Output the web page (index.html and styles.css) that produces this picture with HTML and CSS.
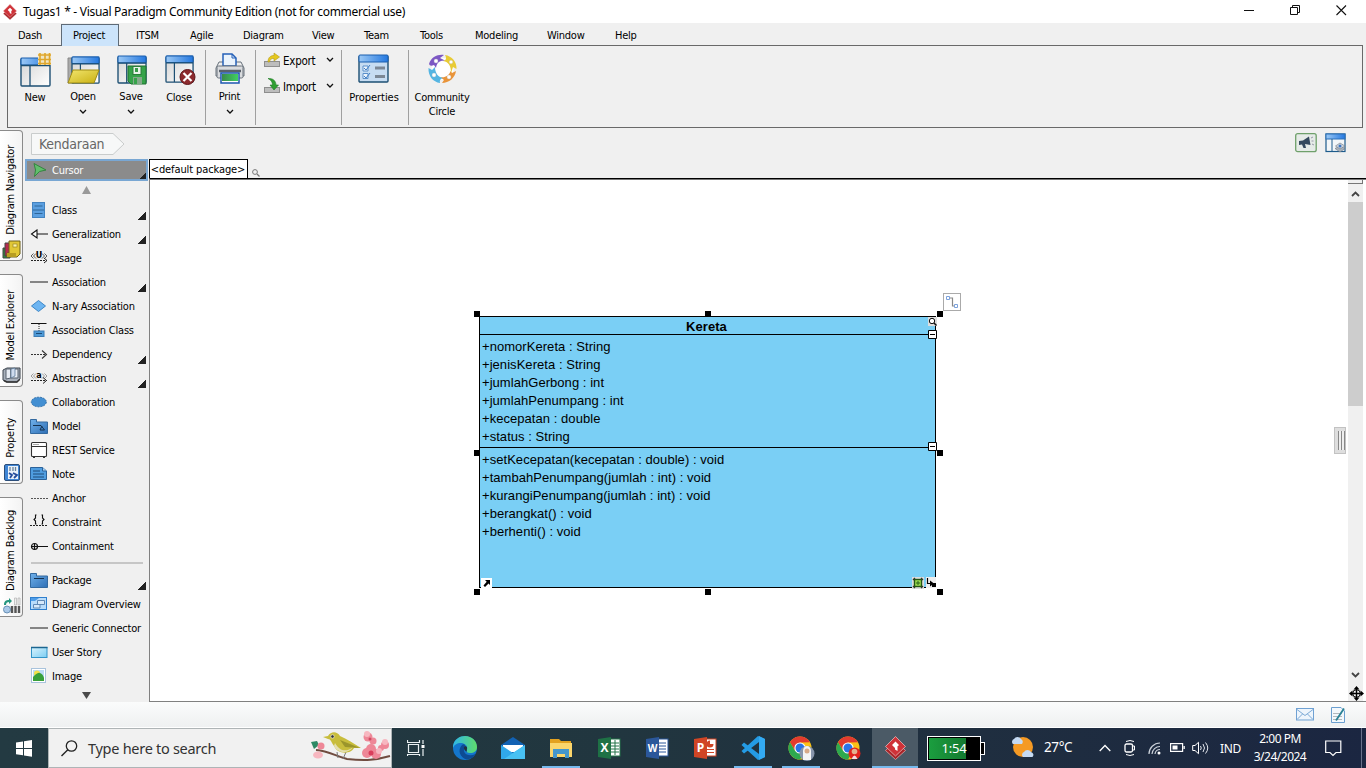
FILE: index.html
```html
<!DOCTYPE html>
<html lang="en">
<head>
<meta charset="utf-8">
<title>Tugas1 * - Visual Paradigm Community Edition</title>
<link rel="stylesheet" href="styles.css">
</head>
<body>
<svg class="defs" width="0" height="0">
  <defs>
    <linearGradient id="gBlue" x1="0" y1="0" x2="1" y2="0"><stop offset="0" stop-color="#9cc9f5"/><stop offset="1" stop-color="#2478e0"/></linearGradient>
    <linearGradient id="gPane" x1="0" y1="0" x2="1" y2="1"><stop offset="0" stop-color="#d4d4d4"/><stop offset="1" stop-color="#ffffff"/></linearGradient>
    <linearGradient id="gFold" x1="0" y1="0" x2="1" y2="1"><stop offset="0" stop-color="#f2e66e"/><stop offset="1" stop-color="#c9b012"/></linearGradient>
    <linearGradient id="gNode" x1="0" y1="0" x2="1" y2="1"><stop offset="0" stop-color="#6fb0ea"/><stop offset="1" stop-color="#2f6fb5"/></linearGradient>
    <linearGradient id="gGreen" x1="0" y1="0" x2="1" y2="0"><stop offset="0" stop-color="#3a8a4a"/><stop offset="1" stop-color="#3fcf62"/></linearGradient>
    <linearGradient id="gEdge" x1="0" y1="0" x2="1" y2="0"><stop offset="0" stop-color="#2fb6e8"/><stop offset="1" stop-color="#5fdc6a"/></linearGradient>
    <linearGradient id="gCyan" x1="0" y1="0" x2="1" y2="1"><stop offset="0" stop-color="#d8f3fd"/><stop offset="1" stop-color="#7ccdf2"/></linearGradient>
    <symbol id="win" viewBox="0 0 32 30">
      <rect x="1" y="2" width="29" height="27" rx="1" fill="url(#gPane)" stroke="#1d4f73" stroke-width="1.4"/>
      <rect x="1" y="1" width="29" height="7" rx="1" fill="url(#gBlue)" stroke="#1a5fae" stroke-width="1.2"/>
      <path d="M1 8.5H30M10 8.5V29" stroke="#1d4f73" stroke-width="1.3"/>
    </symbol>
    <symbol id="chev" viewBox="0 0 8 6"><path d="M1 1L4 4L7 1" fill="none" stroke="#111" stroke-width="1.3"/></symbol>
    <symbol id="logo" viewBox="0 0 21 24">
      <path d="M10.500 5L20.500 14.500L10.500 23.500L.5 14.500Z" fill="#a82428" stroke="#e6b0b0" stroke-width=".7"/>
      <path d="M10.500 .5L20.500 10.500L10.500 20L.5 10.500Z" fill="#cf3238" stroke="#efc5c5" stroke-width=".7"/>
      <path d="M10.500 5.500L14 9L10.500 12.500L7 9ZM10 11H12.500V15L10 13.500Z" fill="#fff"/>
    </symbol>
    <symbol id="chrome" viewBox="0 0 24 24">
      <circle cx="12" cy="12" r="11.5" fill="#fbc116"/>
      <path d="M2 6.2A11.5 11.5 0 0 1 22 6.2L12 6.5L7 14.5Z" fill="#e33b2e"/>
      <path d="M2 6.2A11.5 11.5 0 0 0 12 23.5L16.8 15L7 14.8Z" fill="#2da94f"/>
      <circle cx="12" cy="12" r="5.6" fill="#fff"/><circle cx="12" cy="12" r="4.5" fill="#2a73e8"/>
    </symbol>
  </defs>
</svg>

<header class="titlebar">
  <svg class="app-logo" width="14" height="16"><use href="#logo"/></svg>
  <span class="title">Tugas1 * - Visual Paradigm Community Edition (not for commercial use)</span>
  <div class="winctl">
    <svg width="11" height="11"><path d="M0 5.5H10" stroke="#111"/></svg>
    <svg width="11" height="11"><path d="M.5 2.5H7.5V9.5H.5ZM2.5 2.5V.5H9.5V7.5H7.5" fill="none" stroke="#111"/></svg>
    <svg width="11" height="11"><path d="M.5 .5L10 10M10 .5L.5 10" stroke="#111" stroke-width="1.1"/></svg>
  </div>
</header>

<nav class="menu">
  <span class="m1">Dash</span><span class="active">Project</span><span class="m3">ITSM</span><span class="m4">Agile</span><span class="m5">Diagram</span><span class="m6">View</span><span class="m7">Team</span><span class="m8">Tools</span><span class="m9">Modeling</span><span class="m10">Window</span><span class="m11">Help</span>
</nav>

<section class="ribbon">
  <div class="group g-file">
    <div class="tool">
      <svg width="34" height="34" viewBox="0 0 34 34"><use href="#win" x="2" y="4" width="32" height="30"/><rect x="20" y="0" width="13" height="12" fill="#f0e6c4"/><path d="M22 0V12M27 0V12M31.500 0V12M20 2H33M20 6.500H33M20 10.500H33" stroke="#dfa62c" stroke-width="1.6"/></svg>
      <span>New</span>
    </div>
    <div class="tool">
      <svg width="34" height="34" viewBox="0 0 34 34"><path d="M2 5H8V30H2Z" fill="#aaa" stroke="#888"/><use href="#win" x="5" y="3" width="30" height="28"/><path d="M7 17H33L28 30H2Z" fill="url(#gFold)" stroke="#a08c14"/></svg>
      <span class="up">Open</span><svg class="chev" width="8" height="6"><use href="#chev"/></svg>
    </div>
    <div class="tool">
      <svg width="34" height="34" viewBox="0 0 34 34"><use href="#win" x="3" y="2" width="31" height="29"/><path d="M14 13H32V31H17L14 28Z" fill="#35a349" stroke="#1f7131"/><rect x="19" y="13.500" width="8" height="8" fill="#e9f4ea" stroke="#2b7d3b"/><rect x="21" y="15" width="3" height="4" fill="#379c48"/><path d="M19 24H28V31H19Z" fill="#85a98b"/><path d="M20 25H23V31H20Z" fill="#35a349"/></svg>
      <span class="up">Save</span><svg class="chev" width="8" height="6"><use href="#chev"/></svg>
    </div>
    <div class="tool">
      <svg width="34" height="34" viewBox="0 0 34 34"><use href="#win" x="3" y="2" width="30" height="28"/><circle cx="25.500" cy="24" r="7.500" fill="#8c2a2e" stroke="#5d1519"/><path d="M21.500 20L29.500 28M29.500 20L21.500 28" stroke="#fff" stroke-width="2.2"/></svg>
      <span>Close</span>
    </div>
  </div>
  <div class="group g-print">
    <div class="tool">
      <svg width="34" height="34" viewBox="0 0 34 34"><path d="M6 9H28L31 15V23H3V15Z" fill="#eee" stroke="#66707a"/><path d="M10 1H19L23 5V13H10Z" fill="#eaf3fc" stroke="#2560b8" stroke-width="1.5"/><path d="M19 1V5H23" fill="none" stroke="#2560b8"/><rect x="4" y="13" width="26" height="12" rx="1.500" fill="#d9dbde" stroke="#69717a"/><path d="M6 18H28" stroke="#59616b" stroke-width="2.500"/><path d="M8 20H26V30H8Z" fill="#fff" stroke="#1d57b0" stroke-width="1.500"/><rect x="9" y="21" width="16" height="7" fill="url(#gGreen)"/></svg>
      <span class="up">Print</span><svg class="chev" width="8" height="6"><use href="#chev"/></svg>
    </div>
  </div>
  <div class="group g-io">
    <div class="io"><svg width="17" height="16" viewBox="0 0 17 16"><rect x=".5" y="9.500" width="15" height="5" fill="#bdbdbd" stroke="#8e8e8e"/><path d="M4 10C4 5 7 3.500 10 3.500V1L15.500 5L10 9V6.500C7 6 6 8 5.500 10Z" fill="#e6c81e" stroke="#b39a19" stroke-width=".6"/></svg><span>Export</span><svg width="8" height="6"><use href="#chev"/></svg></div>
    <div class="io"><svg width="17" height="16" viewBox="0 0 17 16"><rect x=".5" y="9.500" width="15" height="5" fill="#bdbdbd" stroke="#8e8e8e"/><path d="M4 .5C9 0 12 3 12 7H14.500L10 12L6 7H8.500C8.500 4 7 2 4 .5Z" fill="#2f9f32" stroke="#1f7a24" stroke-width=".6"/></svg><span>Import</span><svg width="8" height="6"><use href="#chev"/></svg></div>
  </div>
  <div class="group g-prop">
    <div class="tool">
      <svg width="34" height="34" viewBox="0 0 34 34"><rect x="2" y="3" width="29" height="26" rx="1" fill="#c6dcf2" stroke="#1d4f73" stroke-width="1.400"/><rect x="2" y="2" width="29" height="7" rx="1" fill="url(#gBlue)" stroke="#1a5fae"/><path d="M6 13H11V18H6ZM6 20.500H11V25.500H6Z" fill="#eef5fc" stroke="#5a8fca"/><path d="M7 15L9 17L13 12M7 23L9 25L13 20" fill="none" stroke="#3f7ec6"/><path d="M18 15H28M18 23.500H28" stroke="#7b8795" stroke-width="3"/></svg>
      <span>Properties</span>
    </div>
  </div>
  <div class="group g-comm">
    <div class="tool">
      <svg width="34" height="34" viewBox="0 0 34 34"><circle cx="17.500" cy="16" r="11" fill="#fff"/><path d="M4 11C6 4 13 1 19 2L15 5L21 8C15 7 12 9 11 15L9 12Q5 14 4 11Z" fill="#7d58c4"/><path d="M20 2C27 3 32 9 31.500 16L28 14L26 20C26 13 24 9 18 8Q23 7 20 2Z" fill="#e8cb35"/><path d="M31 18C30 25 24 30 17 30L19 27L15 24C20 25 24 23 25.500 18L27 20Z" fill="#e9943a"/><path d="M15 30C8 29 3 23 3.500 15L7 17L10 14C10 20 13 24 18 25Q14 26 15 30Z" fill="#55b5e2"/><g fill="#fff" stroke="#bbb" stroke-width=".3"><circle cx="11" cy="8" r="2"/><circle cx="26" cy="9" r="1.800"/><circle cx="24" cy="24" r="2"/><circle cx="9" cy="22" r="2"/></g></svg>
      <span>Community<br>Circle</span>
    </div>
  </div>
</section>

<main class="work">
  <aside class="sidetabs">
    <div class="stab t1"><span>Diagram Navigator</span><svg width="19" height="19" viewBox="0 0 19 19"><path d="M1 8H8V18H1Z" fill="#2f8a3a" stroke="#444"/><path d="M3 3H12V16H3Z" fill="#b52a50" stroke="#444"/><path d="M7 1H18V14L15 17H5V13H7Z" fill="#e1c735" stroke="#6f601a"/><path d="M5 13H14V17H5Z" fill="#b79d23"/><rect x="11" y="4" width="4" height="3" fill="#fff4a4" stroke="#8a7720" stroke-width=".6"/></svg></div>
    <div class="stab t2"><span>Model Explorer</span><svg width="19" height="19" viewBox="0 0 19 19"><path d="M1 4L5 2H18V13L15 16H4L1 14Z" fill="#a8b0bb" stroke="#3d454e"/><path d="M4 3H9V12L4 13ZM9 3H16V12H9Z" fill="#e8edf4" stroke="#59636f"/><path d="M9 3L13 2V10L9 12Z" fill="#cfdcee" stroke="#50708f" stroke-width=".7"/><path d="M2 14.500L5 16H15L17.500 13.500" fill="none" stroke="#333" stroke-width="1.500"/></svg></div>
    <div class="stab t3"><span>Property</span><svg width="19" height="19" viewBox="0 0 19 19"><rect x="2.500" y="1.500" width="15" height="16" rx="1.500" fill="#3f86d6" stroke="#2c4e7a"/><rect x="6" y="3" width="10" height="13" fill="#eaf2fa"/><path d="M8 4V8M11 4V8M13.500 4V8" stroke="#69829c" stroke-width="1.300"/><path d="M7 10L10 12L8 15M11 10L15 12L12 15" fill="none" stroke="#244c9b" stroke-width="1.800"/></svg></div>
    <div class="stab t4"><span>Diagram Backlog</span><svg width="19" height="19" viewBox="0 0 19 19"><path d="M2 9C2 5 4 4 7 4V2L10 5L7 8V6C5 6 4 7 4 9Z" fill="#26967f"/><circle cx="5" cy="13.500" r="3.500" fill="#a9c8e8" stroke="#6a91b6"/><path d="M12.500 2H14.500V9H12.500ZM16 2H18V9H16Z" fill="#eee" stroke="#aaa" stroke-width=".6"/><path d="M10 10V17M13.500 10V17M17 10V17" stroke="#555" stroke-width="2.400"/></svg></div>
  </aside>
  <div class="center">
    <div class="crumbbar">
      <div class="crumb"><svg width="94" height="22"><path d="M.5 .5H82L93 11L82 21.500H.5Z" fill="#f7f8f8" stroke="#c9cccc"/></svg><span>Kendaraan</span></div>
      <div class="crumb-actions">
        <svg width="22" height="20" viewBox="0 0 22 20"><rect x=".7" y=".7" width="20.500" height="18" rx="2" fill="#e6ebe8" stroke="#6fa06b" stroke-width="1.300"/><path d="M4 8L8 7.500L14 3.500L15.500 12L10 11L11 15H8.500L7 11.500L4 12Z" fill="#34495e"/><path d="M16 5L18 4M16.500 8H18.500M17 11L19 12" stroke="#99a" /></svg>
        <svg width="22" height="20" viewBox="0 0 22 20"><rect x="1" y="1" width="19" height="17.500" fill="#f3f6f8" stroke="#1d5b8c" stroke-width="1.200"/><rect x="1" y="1" width="19" height="5" fill="url(#gBlue)" stroke="#2b6fb8"/><path d="M7 6V18" stroke="#1d5b8c"/><path d="M10 15.500L15 13L20 15.500L15 19Z" fill="#a9b2bd" stroke="#6d7680" stroke-width=".6"/><path d="M10.500 13L15 10L20 13L15 16Z" fill="#ced5de" stroke="#6d7680" stroke-width=".6"/><circle cx="15" cy="13" r="1.500" fill="#3a75c2"/></svg>
      </div>
    </div>
    <div class="editor">
      <aside class="palette">
        <div class="row cursor more"><svg viewBox="0 0 18 18"><path d="M3 2.500L15 9L8.500 10.500L3.500 15.500L4.500 9Z" fill="#61bf6c" stroke="#33853f"/></svg><span>Cursor</span></div>
        <div class="scroll up"><svg width="9" height="8"><path d="M4.500 0L9 8H0Z" fill="#999"/></svg></div>
        <div class="row more"><svg viewBox="0 0 18 18"><rect x="2.500" y="1.500" width="12" height="15" fill="#5b9fe0" stroke="#4383c0"/><path d="M4.500 5H12.500M3 9H14M4.500 12.500H12.500" stroke="#245887" stroke-width=".8"/></svg><span>Class</span></div>
        <div class="row more"><svg viewBox="0 0 18 18"><path d="M7 5L1.500 9L7 13ZM7 9H18" fill="#fff" stroke="#111" stroke-width="1.100"/></svg><span>Generalization</span></div>
        <div class="row"><svg viewBox="0 0 18 18"><path d="M3.500 4.500L1 7L3.500 9.500M6 4.500L3.500 7L6 9.500M12 4.500L14.500 7L12 9.500M14.500 4.500L17 7L14.500 9.500" fill="none" stroke="#333" stroke-width=".8"/><text x="9" y="9" class="glyph">U</text><path d="M1 11.500H17" stroke="#222" stroke-dasharray="2 1"/><path d="M14 9L17 11.500L14 14" fill="none" stroke="#222"/></svg><span>Usage</span></div>
        <div class="row more"><svg viewBox="0 0 18 18"><path d="M0 9H18" stroke="#858585" stroke-width="2"/></svg><span>Association</span></div>
        <div class="row"><svg viewBox="0 0 18 18"><path d="M8.500 3.500L15.500 9L8.500 14.500L1.500 9Z" fill="#6db5f2" stroke="#3d87c6"/></svg><span>N-ary Association</span></div>
        <div class="row"><svg viewBox="0 0 18 18"><path d="M1 2.500H16.500" stroke="#111"/><path d="M9 3V10" stroke="#222" stroke-dasharray="1 1"/><rect x="4" y="10" width="10" height="5.500" fill="#4f9bd8" stroke="#3c7db5"/><path d="M6 12.500H12" stroke="#1b4a78"/></svg><span>Association Class</span></div>
        <div class="row more"><svg viewBox="0 0 18 18"><path d="M1 9.500H15" stroke="#333" stroke-dasharray="2 1"/><path d="M12 5.500L16.500 9.500L12 13.500" fill="none" stroke="#333" stroke-width="1.100"/></svg><span>Dependency</span></div>
        <div class="row more"><svg viewBox="0 0 18 18"><path d="M3.500 4.500L1 7L3.500 9.500M6 4.500L3.500 7L6 9.500M12 4.500L14.500 7L12 9.500M14.500 4.500L17 7L14.500 9.500" fill="none" stroke="#888" stroke-width=".8"/><text x="9" y="9" class="glyph">a</text><path d="M1 11.500H17" stroke="#222" stroke-dasharray="2 1"/><path d="M13 8.500L16.500 11.500L13 14.500" fill="none" stroke="#222"/></svg><span>Abstraction</span></div>
        <div class="row"><svg viewBox="0 0 18 18"><ellipse cx="8.800" cy="9" rx="7.500" ry="4.800" fill="#438fd2" stroke="#2f6fa9" stroke-dasharray="2 1"/></svg><span>Collaboration</span></div>
        <div class="row"><svg viewBox="0 0 18 18"><path d="M.5 2.500H6.500V5H17.500V16.500H.5Z" fill="url(#gNode)" stroke="#33699f"/><path d="M3 8.500H11L14.500 13H10L12 9" fill="none" stroke="#14314f"/></svg><span>Model</span></div>
        <div class="row"><svg viewBox="0 0 18 18"><rect x="1.500" y="1.500" width="15" height="14" rx="1" fill="#fff" stroke="#333" stroke-width="1.100"/><path d="M2 5.500H16M3 16.500H5M13 16.500H15" stroke="#333"/><path d="M3 3.500H9" stroke="#aaa"/></svg><span>REST Service</span></div>
        <div class="row"><svg viewBox="0 0 18 18"><path d="M.5 2.500H12.500L16.500 6V14.500H.5Z" fill="#4f9de0" stroke="#2b629a"/><path d="M12.500 2.500V6H16.500" fill="#a6d1f5" stroke="#2b629a"/><path d="M3 6H10M3 9H14M3 12H14" stroke="#1e4b78"/></svg><span>Note</span></div>
        <div class="row"><svg viewBox="0 0 18 18"><path d="M1 9.500H18" stroke="#555" stroke-dasharray="2 1"/></svg><span>Anchor</span></div>
        <div class="row"><svg viewBox="0 0 18 18"><path d="M6.500 2H5.500V5L4 6.500L5.500 8V11H6.500M11.500 2H12.500V5L14 6.500L12.500 8V11H11.500" fill="none" stroke="#111" stroke-width="1.100"/><path d="M0 12.500H18" stroke="#222" stroke-dasharray="2 1"/></svg><span>Constraint</span></div>
        <div class="row"><svg viewBox="0 0 18 18"><circle cx="4.500" cy="9.500" r="3" fill="none" stroke="#111" stroke-width="1.200"/><path d="M1 9.500H18M4.500 6.500V12.500" stroke="#111" stroke-width="1.200"/></svg><span>Containment</span></div>
        <div class="sep"></div>
        <div class="row more"><svg viewBox="0 0 18 18"><path d="M.5 2.500H6.500V5H17.500V16.500H.5Z" fill="url(#gNode)" stroke="#33699f"/><path d="M4 7.500H14" stroke="#14314f"/></svg><span>Package</span></div>
        <div class="row"><svg viewBox="0 0 18 18"><rect x=".5" y="2.500" width="16" height="12" fill="#b9dcfa" stroke="#2f7fce"/><path d="M1 3H9L5 6H1Z" fill="#4f9de8"/><path d="M7.500 5.500H14.500V9.500H7.500ZM3.500 9.500H10V13H3.500Z" fill="#d7e9fa" stroke="#6189b5"/></svg><span>Diagram Overview</span></div>
        <div class="row"><svg viewBox="0 0 18 18"><path d="M0 9H18" stroke="#858585" stroke-width="2"/></svg><span>Generic Connector</span></div>
        <div class="row"><svg viewBox="0 0 18 18"><rect x="1.500" y="4.500" width="15.500" height="10" fill="url(#gCyan)" stroke="#3294c8"/><path d="M1 4.500H17.500" stroke="#1c6690" stroke-width="1.500"/></svg><span>User Story</span></div>
        <div class="row"><svg viewBox="0 0 18 18"><rect x="1.500" y="1.500" width="14" height="14" fill="#fff" stroke="#a9c3dc"/><rect x="3" y="3" width="11" height="11" fill="#bcdcf6"/><circle cx="7" cy="6.500" r="3" fill="#f2e04a"/><path d="M3 14V10Q8 5 10 6Q13 7 14 11V14Z" fill="#38a03a"/></svg><span>Image</span></div>
        <div class="scroll down"><svg width="9" height="7"><path d="M0 0H9L4.500 7Z" fill="#4a4a4a"/></svg></div>
      </aside>
      <section class="stage">
        <div class="pkgbar"><div class="pkg">&lt;default package&gt;</div><svg width="8" height="8"><circle cx="3" cy="3" r="2.400" fill="none" stroke="#777"/><path d="M5 5L7.500 7.500" stroke="#777" stroke-width="1.200"/></svg></div>
        <div class="canvasrow">
          <div class="canvas">
            <div class="uml">
              <div class="name">Kereta</div>
              <div class="attrs"><div>+nomorKereta : String</div><div>+jenisKereta : String</div><div>+jumlahGerbong : int</div><div>+jumlahPenumpang : int</div><div>+kecepatan : double</div><div>+status : String</div></div>
              <div class="ops"><div>+setKecepatan(kecepatan : double) : void</div><div>+tambahPenumpang(jumlah : int) : void</div><div>+kurangiPenumpang(jumlah : int) : void</div><div>+berangkat() : void</div><div>+berhenti() : void</div></div>
            </div>
            <i class="h x1 y1"></i><i class="h x2 y1"></i><i class="h x3 y1"></i><i class="h x1 y2"></i><i class="h x3 y2"></i><i class="h x1 y3"></i><i class="h x2 y3"></i><i class="h x3 y3"></i>
            <svg class="ov o-link" width="18" height="18"><rect x=".5" y=".5" width="17" height="17" fill="#fff" stroke="#aaa"/><path d="M7 5H9.500V13H11" fill="none" stroke="#888" stroke-width="1.200"/><path d="M3.500 3.500H6.500V6.500H3.500ZM11.500 11.500H14.500V14.500H11.500Z" fill="#fff" stroke="#7da2dc"/></svg>
            <svg class="ov o-mag" width="9" height="9"><rect width="9" height="9" fill="#ddd"/><circle cx="4" cy="4" r="2.700" fill="#fff" stroke="#111"/><path d="M6 6L8.500 8.500" stroke="#111" stroke-width="1.500"/></svg>
            <svg class="ov o-m1" width="9" height="9"><path d="M.5 .5H8.500V8.500H.5Z" fill="#fff" stroke="#000"/><path d="M2 4.500H7" stroke="#000"/></svg>
            <svg class="ov o-m2" width="9" height="9"><path d="M.5 .5H8.500V8.500H.5Z" fill="#fff" stroke="#000"/><path d="M2 4.500H7" stroke="#000"/></svg>
            <svg class="ov o-arr" width="11" height="11"><rect width="11" height="11" fill="#fff"/><path d="M4 2H9V7L7.500 5.500L4 9L2.500 7.500L5.700 3.800Z" fill="#000"/></svg>
            <svg class="ov o-grn" width="12" height="12"><rect width="12" height="12" fill="#ddd"/><path d="M1 3L3 1M9 1L11 3M11 9L9 11M3 11L1 9" fill="none" stroke="#333" stroke-width="1.300"/><rect x="2.500" y="2.500" width="7" height="7" fill="#9bdc50" stroke="#245614" stroke-width="1.400"/><path d="M4 6H8M6 4V8" stroke="#2a611b"/></svg>
            <svg class="ov o-sub" width="11" height="11"><rect width="10" height="11" fill="#eee"/><path d="M1.500 1V6.500H5" fill="none" stroke="#000" stroke-width="1.200"/><path d="M4 3.500L8 6.500L4 9.500Z" fill="#000"/><rect x="6" y="6" width="4" height="4" fill="#000"/></svg>
          </div>
          <div class="splitter"><i></i></div>
          <div class="vscroll">
            <div class="notch"></div>
            <svg class="sa" width="9" height="6"><path d="M1 5L4.500 1.500L8 5" fill="none" stroke="#444" stroke-width="1.800"/></svg>
            <div class="thumb"></div><div class="track"></div>
            <svg class="sa low" width="9" height="6"><path d="M1 1L4.500 4.500L8 1" fill="none" stroke="#444" stroke-width="1.800"/></svg>
            <svg class="pan" width="15" height="15"><path d="M7.500 0L10.500 3.500H4.500ZM7.500 15L10.500 11.500H4.500ZM0 7.500L3.500 4.500V10.500ZM15 7.500L11.500 4.500V10.500Z" fill="#000"/><path d="M7.500 2V13M2 7.500H13" stroke="#000" stroke-width="1.400"/><circle cx="7.500" cy="7.500" r="3.800" fill="none" stroke="#000"/></svg>
          </div>
        </div>
      </section>
    </div>
  </div>
</main>

<footer class="status">
  <svg width="18" height="13"><rect x=".5" y=".5" width="17" height="11.500" fill="#eef5fc" stroke="#6fa1d3"/><path d="M1 1.500L9 7.500L17 1.500M1 11.500L6.500 6M17 11.500L11.500 6" fill="none" stroke="#7ba9d6"/></svg>
  <svg width="17" height="18"><path d="M1.500 1.500H11L14.500 5V16.500H1.500Z" fill="#f3f8fc" stroke="#6b9fd0"/><path d="M3 7.500H12M3 10.500H12M3 13.500H12" stroke="#b2b8bd"/><path d="M6 14.500L14 2.500" stroke="#2a8296" stroke-width="1.800"/></svg>
</footer>

<div class="taskbar">
  <div class="start"><svg width="17" height="17"><path d="M0 2.500L7 1.500V8H0ZM8 1.300L16 0V8H8ZM0 9H7V15.300L0 14.300ZM8 9H16V16.700L8 15.500Z" fill="#fff"/></svg></div>
  <div class="search">
    <svg width="17" height="17"><circle cx="10.500" cy="6" r="5.200" fill="none" stroke="#222" stroke-width="1.300"/><path d="M6.800 9.800L.5 16" stroke="#222" stroke-width="1.400"/></svg>
    <span>Type here to search</span>
    <svg class="bird" width="80" height="34" viewBox="0 0 80 34"><path d="M5 20C18 21 24 26 36 29C55 31 65 30 79 26" fill="none" stroke="#704c40" stroke-width="2"/><path d="M26 22L27 28M35 22L32 29" stroke="#777"/><path d="M17 6C20 1 26 1 29 6C36 9 42 13 50 18L43 18C40 24 27 25 23 16C20 12 20 9 17 9L12 7Z" fill="#c8bd3c"/><path d="M24 13C29 22 36 22 42 17C38 24 27 24 23 16Z" fill="#e4dfb0"/><path d="M29 10L49 18L34 17Z" fill="#9b952b"/><circle cx="21.500" cy="6.500" r="1.700" fill="#333" stroke="#fff" stroke-width=".6"/><path d="M0 12L6 11L8 15L3 19Z" fill="#2e8a66"/><g fill="#ee8797"><circle cx="10" cy="16" r="3.500"/><circle cx="57" cy="7" r="4.500"/><circle cx="62" cy="11" r="3.500"/><circle cx="56" cy="23" r="5"/><circle cx="65" cy="24" r="5"/><circle cx="60" cy="19" r="5"/><circle cx="74" cy="15" r="4"/><circle cx="70" cy="18" r="3"/></g><g fill="#f7b7c0"><ellipse cx="7" cy="25" rx="5" ry="3.500"/><circle cx="56" cy="4" r="3"/><circle cx="68" cy="21" r="3"/><circle cx="74" cy="12" r="3"/></g><circle cx="60" cy="23" r="2.500" fill="#d93e5b"/><circle cx="59" cy="9" r="1.500" fill="#cf4a62"/></svg>
  </div>
  <div class="apps">
    <div class="app a-tv"><svg width="18" height="17"><path d="M1.500 4.500H11.500V12.500H1.500ZM.5 0V2.500H12.500V0M.5 16V14.500H12.500V16M16 0V4M16 9V16" fill="none" stroke="#e8eef0" stroke-width="1.200"/><rect x="14.500" y="5" width="3" height="3" fill="#fff"/></svg></div>
    <div class="app"><svg width="26" height="26" viewBox="0 0 26 26"><circle cx="13" cy="13" r="12" fill="#1476cc"/><path d="M1 11C2 4 8 1 13 1C20 1 25 6 25 12C25 16 22 18 18 18C15 18 14 17 15 15C16 10 12 8 9 8C5 8 2 10 1 13Z" fill="url(#gEdge)"/><path d="M10 10C5 15 8 23 15 24.500C19 24 22 22 23.500 19C17 22 11 19 12 14C12 12 13 11 13 10C12 9 11 9 10 10Z" fill="#0d4b93"/><path d="M13 11C17 12 14 15 15 16.500C12 16 11 12 13 11Z" fill="#203340"/></svg></div>
    <div class="app"><svg width="26" height="26" viewBox="0 0 26 26"><path d="M1 10L13 2L25 10V24H1Z" fill="#1262b3"/><path d="M3 10H23V17H3Z" fill="#fff"/><path d="M1 10L13 18L25 10V24H1Z" fill="#30a8ea"/><path d="M13 18L25 10V24H4Z" fill="#48c1f3"/></svg></div>
    <div class="app open"><svg width="24" height="24" viewBox="0 0 24 24"><path d="M1 3H10L12 5H22V10H1Z" fill="#e3a220"/><path d="M1 7H23V21H1Z" fill="#fbd66c"/><path d="M4 13H20V22H16V18H8V22H4Z" fill="#4497cc"/></svg></div>
    <div class="app"><svg width="24" height="24" viewBox="0 0 24 24"><rect x="12" y="3" width="11" height="17" fill="#fff" stroke="#24744a"/><path d="M13 7H22M13 10H22M13 13H22M13 16H22M18 4V19" stroke="#24744a"/><path d="M1 3L14 1V23L1 21Z" fill="#1e7145"/><text x="7.500" y="16" class="office">X</text></svg></div>
    <div class="app"><svg width="24" height="24" viewBox="0 0 24 24"><rect x="12" y="3" width="11" height="17" fill="#fff" stroke="#2b579a"/><path d="M14 7H21M14 10H21M14 13H21M14 16H21" stroke="#2b579a"/><path d="M1 3L14 1V23L1 21Z" fill="#2b579a"/><text x="7.500" y="15.500" class="office w">W</text></svg></div>
    <div class="app"><svg width="24" height="24" viewBox="0 0 24 24"><rect x="12" y="3" width="11" height="17" fill="#fff" stroke="#d04525"/><path d="M14 13.500H21M14 16.500H21" stroke="#d04525"/><circle cx="17" cy="8" r="3.500" fill="#d04525"/><path d="M17 8V4A4 4 0 0 1 21 8Z" fill="#fff"/><path d="M1 3L14 1V23L1 21Z" fill="#d04525"/><text x="7.500" y="16" class="office">P</text></svg></div>
    <div class="app open"><svg width="26" height="26" viewBox="0 0 26 26"><path d="M18 1L25 4V22L18 25L1.500 10L4 7.500L19 19V7L4 18.500L1.500 16Z" fill="#249be4"/><path d="M19 1L25 4V22L19 25Z" fill="#33aaf2"/></svg></div>
    <div class="app open"><svg width="27" height="26" viewBox="0 0 27 26"><use href="#chrome" width="24" height="24" y="1"/><circle cx="19" cy="18.500" r="7.500" fill="#8795ab"/><path d="M15 16A4 5 0 0 1 23 16L23 25H15Z" fill="#f4f4f4"/><circle cx="19" cy="16" r="2.500" fill="#d8a987"/></svg></div>
    <div class="app"><svg width="26" height="26" viewBox="0 0 26 26"><use href="#chrome" width="24" height="24" y="1"/><circle cx="18.500" cy="18.500" r="6" fill="#e2231c"/><circle cx="18.500" cy="16.500" r="2.800" fill="#e5b18e"/><path d="M15.500 24Q18.500 17 21.500 24Z" fill="#f6dfdf"/></svg></div>
    <div class="app open current"><svg width="21" height="24"><use href="#logo"/></svg></div>
  </div>
  <div class="battery"><div class="cell"><span>1:54</span></div><i></i></div>
  <svg class="weather" width="25" height="24" viewBox="0 0 25 24"><circle cx="13" cy="11" r="10" fill="#f59a24"/><path d="M3 8A3 3 0 0 1 4 3A4 4 0 0 1 11 3Q14 5 12 8Z" fill="#c5daf3"/><path d="M13 21A3 3 0 0 1 14 16A4 4 0 0 1 21 16Q25 18 22.500 21Z" fill="#c5daf3"/></svg>
  <span class="temp">27°C</span>
  <div class="tray">
    <svg class="t-up" width="12" height="8"><path d="M.7 7L6 1.500L11.300 7" fill="none" stroke="#fff" stroke-width="1.300"/></svg>
    <svg class="t-cam" width="12" height="16"><rect x="1" y="4" width="7.500" height="8" rx="1.500" fill="none" stroke="#fff" stroke-width="1.300"/><path d="M8.500 6H10.500V10H8.500M2 1.500Q6 -.5 10 1.500M2 14.500Q6 16.500 10 14.500" fill="none" stroke="#fff"/></svg>
    <svg class="t-net" width="13" height="13"><path d="M1 12A11 11 0 0 1 12 1M4 12A8 8 0 0 1 12 4.500M7 12A5 5 0 0 1 12 7.500" fill="none" stroke="#ccd2da" stroke-width="1.200"/><circle cx="11" cy="11" r="1.500" fill="#fff"/></svg>
    <svg class="t-bat" width="15" height="10"><rect x=".6" y=".6" width="12" height="7.800" fill="none" stroke="#fff" stroke-width="1.200"/><rect x="2.500" y="2.500" width="5" height="4" fill="#fff"/><rect x="13.500" y="3" width="1.300" height="3" fill="#fff"/></svg>
    <svg class="t-vol" width="17" height="14"><path d="M.7 4.500H3L6.500 1.300V12.700L3 9.500H.7Z" fill="none" stroke="#fff"/><path d="M8.500 5Q10 7 8.500 9M11 3Q14 7 11 11M13.500 1.500Q18 7 13.500 12.500" fill="none" stroke="#e5e8ee"/></svg>
  </div>
  <span class="lang">IND</span>
  <div class="clock"><span>2:00 PM</span><span class="date">3/24/2024</span></div>
  <svg class="notif" width="17" height="17"><path d="M.7 1H15.800V12.500H11L8 15.500L5 12.500H.7Z" fill="none" stroke="#fff" stroke-width="1.200"/></svg>
  <div class="peek"></div>
</div>
</body>
</html>
```
FILE: styles.css
```css
* { box-sizing: border-box; }
body {
  margin: 0; width: 1366px; height: 768px; overflow: hidden;
  display: flex; flex-direction: column; background: #f0f0f0; color: #000;
  font: 11px/14px "DejaVu Sans Condensed", "DejaVu Sans", sans-serif;
  font-stretch: condensed; letter-spacing: -0.25px; white-space: nowrap;
}
svg { display: block; flex: none; }
.defs { position: absolute; }

.titlebar { height: 23px; flex: none; background: #fff; display: flex; align-items: center; padding: 0 19px 0 3px; }
.title { margin-left: 6px; font: 12px/16px "Noto Sans", sans-serif; letter-spacing: -0.3px; padding-top: 1px; }
.winctl { margin-left: auto; display: flex; gap: 35px; margin-top: -3px; }

.menu { height: 22px; flex: none; display: flex; padding-left: 18px; line-height: 26px; }
.menu span { flex: none; width: 60px; }
.menu .m1 { width: 43px; }
.menu .active { width: 58px; text-align: center; background: #cce4fb; border: 1px solid #5f6b77; border-bottom: 0; line-height: 22px; margin-top: 1px; height: 22px; position: relative; z-index: 1; padding-right: 2px; }
.menu .m3 { width: 71px; padding-left: 17px; }
.menu .m4 { width: 53px; }
.menu .m5 { width: 69px; }
.menu .m6 { width: 52px; }
.menu .m7 { width: 56px; }
.menu .m8 { width: 55px; }
.menu .m9 { width: 72px; }
.menu .m10 { width: 68px; }

.ribbon { height: 83px; flex: none; margin: 0 3px 0 7px; border: 1px solid #696969; display: flex; padding: 4px 0 2px; }
.group { border-right: 1px solid #a0a0a0; display: flex; }
.g-file { width: 198px; padding-left: 3px; }
.g-print { width: 50px; justify-content: center; }
.g-print .tool { margin-left: -2px; }
.g-io { width: 86px; flex-direction: column; padding: 2px 0 0 8px; }
.g-prop { width: 67px; justify-content: center; }
.g-prop .tool { margin-left: -2px; }
.g-comm { width: 66px; justify-content: center; border: 0; }
.tool { width: 48px; display: flex; flex-direction: column; align-items: center; padding-top: 3px; text-align: center; flex: none; }
.tool span { margin-top: 4px; }
.tool span.up { margin-top: 3px; }
.tool .chev { margin-top: 5px; }
.g-prop .tool, .g-comm .tool { width: 64px; }
.g-prop span { letter-spacing: -0.05px; }
.io { display: flex; align-items: center; height: 26px; margin-top: -5px; margin-bottom: 5px; }
.io span { width: 43px; margin-left: 2px; font-size: 11.5px; padding-top: 1px; }

.work { flex: 1; display: flex; min-height: 0; }
.sidetabs { width: 25px; flex: none; padding-top: 2px; display: flex; flex-direction: column; }
.stab { width: 23px; border: 1px solid #8a8a8a; border-left: 0; border-radius: 0 4px 4px 0; background: linear-gradient(90deg, #fff, #f3f3f3); display: flex; flex-direction: column; align-items: center; justify-content: flex-end; flex: none; padding: 0 0 1px 1px; }
.stab span { writing-mode: vertical-rl; transform: rotate(180deg); margin-bottom: 5px; margin-right: 2px; }
.t1 { height: 131px; margin-bottom: 13px; }
.t2 { height: 113px; margin-bottom: 13px; }
.t3 { height: 84px; margin-bottom: 13px; }
.t4 { height: 120px; }

.center { flex: 1; display: flex; flex-direction: column; min-width: 0; }
.crumbbar { height: 31px; flex: none; display: flex; justify-content: space-between; padding: 5px 19px 0 6px; }
.crumb { display: grid; height: 22px; }
.crumb > * { grid-area: 1 / 1; }
.crumb span { padding-left: 8px; line-height: 23px; font-size: 14px; letter-spacing: -0.25px; color: #666; }
.crumb-actions { display: flex; gap: 8px; }

.editor { flex: 1; display: flex; min-height: 0; }
.palette { width: 124px; flex: none; display: flex; flex-direction: column; letter-spacing: -0.22px; }
.row { height: 24px; flex: none; display: flex; align-items: center; gap: 4px; padding-left: 5px; background-repeat: no-repeat; }
.row span { padding-top: 2px; }
.row svg { width: 18px; height: 18px; }
.row.more { background-image: linear-gradient(135deg, transparent 50%, #222 50%); background-size: 8px 8px; background-position: 113px 14px; }
.row.cursor { height: 22px; background-color: #8b8b8b; border: 2px solid #79a7d3; color: #fff; padding-left: 4px; margin-right: 1px; background-position: 112px 11px; gap: 3px; }
.scroll { display: flex; justify-content: center; align-items: center; flex: none; padding-right: 2px; }
.scroll.up { height: 17px; }
.scroll.down { height: 15px; }
.sep { height: 10px; flex: none; background: linear-gradient(#c6c6c6, #c6c6c6) 6px 4px / 112px 2px no-repeat; }

.stage { flex: 1; min-width: 0; display: flex; flex-direction: column; }
.pkgbar { height: 19px; flex: none; display: flex; }
.pkg { width: 99px; height: 20px; background: #fff; border: 1px solid #000; text-align: center; line-height: 20px; letter-spacing: -0.1px; padding-right: 1px; }
.pkgbar svg { margin: 10px 0 0 4px; }
.canvasrow { flex: 1; display: flex; background: linear-gradient(#777, #777) 0 0 / 100% 1px no-repeat #fff; padding-top: 1px; border-top: 1px solid #000; border-left: 1px solid #808080; border-bottom: 1px solid #808080; min-height: 0; }
.canvas { width: 1184px; flex: none; position: relative; }
.uml { position: absolute; left: 329px; top: 136px; width: 457px; height: 272px; border: 1px solid #000; background: #7acff5; font: 13px/18px "Liberation Sans", Arial, sans-serif; letter-spacing: 0.05px; }
.name { height: 18px; line-height: 19px; text-align: center; font-weight: bold; border-bottom: 1px solid #000; padding-right: 2px; }
.attrs { height: 113px; padding: 3px 0 0 2px; border-bottom: 1px solid #000; }
.ops { padding: 3px 0 0 2px; }
.h { position: absolute; width: 6px; height: 6px; background: #000; }
.x1 { left: 324px; } .x2 { left: 555px; } .x3 { left: 787px; }
.y1 { top: 131px; } .y2 { top: 270px; } .y3 { top: 409px; }
.ov { position: absolute; }
.o-link { left: 793px; top: 113px; }
.o-mag { left: 778px; top: 137px; }
.o-m1 { left: 778px; top: 150px; }
.o-m2 { left: 778px; top: 262px; }
.o-arr { left: 331px; top: 398px; }
.o-grn { left: 762px; top: 397px; }
.o-sub { left: 776px; top: 397px; }
.splitter { width: 14px; flex: none; display: flex; align-items: center; }
.splitter i { width: 12px; height: 27px; background: repeating-linear-gradient(90deg, #888 0 1px, #eee 1px 3px) 3px 3px / 7px 19px no-repeat #dedede; border: 1px solid #c2c2c2; }
.vscroll { width: 15px; flex: none; background: #f0f0f0; display: flex; flex-direction: column; align-items: center; }
.notch { width: 15px; height: 4px; border-bottom: 1px solid #777; border-right: 1px solid #777; }
.sa { margin: 7px 0 5px; }
.sa.low { margin-bottom: 8px; }
.thumb { width: 15px; height: 204px; background: #cdcdcd; }
.track { flex: 1; }
.pan { margin: 0 -1px 0 1px; }

.status { height: 26px; flex: none; border-bottom: 1px solid #fff; background: linear-gradient(#fbfcfc, #eef0f1); display: flex; align-items: center; justify-content: flex-end; gap: 16px; padding-right: 19px; }

.taskbar { height: 40px; flex: none; display: flex; align-items: center; background: linear-gradient(90deg, #233a42 0, #21363f 45%, #20303f 65%, #1b2641 100%); color: #fff; font: 12px/17px "Noto Sans", sans-serif; letter-spacing: -0.2px; }
.start { width: 48px; flex: none; padding-left: 16px; }
.search { width: 344px; height: 40px; flex: none; background: #f1f1f1; border: 1px solid #aeb4b6; display: flex; align-items: center; padding-left: 12px; color: #333; font-size: 14.5px; letter-spacing: -0.28px; }
.search span { margin-left: 10px; }
.bird { margin-left: auto; margin-top: -2px; }
.apps { display: flex; height: 40px; flex: none; }
.app { width: 48px; display: flex; justify-content: center; align-items: center; flex: none; }
.a-tv { padding-right: 2px; width: 49px; }
.app.open { background: linear-gradient(#76b9ed, #76b9ed) center bottom / 38px 2px no-repeat; }
.app.current { width: 46px; background: linear-gradient(#76b9ed, #76b9ed) center bottom / 46px 2px no-repeat #4b5a66; margin-left: -1px; }
.battery { width: 58px; margin-left: 9px; flex: none; display: flex; align-items: center; }
.cell { width: 54px; height: 25px; border: 1px solid #fff; padding: 1px; background: linear-gradient(90deg, #1b9e3f, #147a30) 1px 1px / 37px 21px no-repeat #000; text-align: center; line-height: 21px; font-size: 13px; }
.battery i { width: 4px; height: 13px; background: #000; border: 1px solid #fff; border-left: 0; }
.weather { margin-left: 25px; }
.temp { width: 43px; flex: none; margin-left: 9px; font-size: 13.5px; letter-spacing: -0.4px; margin-top: -1px; }
.tray { display: flex; align-items: center; margin-left: 12px; flex: none; }
.t-cam { margin-left: 13px; } .t-net { margin-left: 12px; } .t-bat { margin-left: 9px; } .t-vol { margin-left: 7px; }
.lang { width: 22px; margin-left: 11px; flex: none; letter-spacing: -0.4px; }
.clock { width: 66px; margin-left: 5px; display: flex; flex-direction: column; align-items: center; line-height: 18px; flex: none; letter-spacing: -0.5px; }
.notif { margin-left: 12px; }
.peek { margin-left: auto; margin-right: 4px; width: 1px; height: 40px; background: #69718a; }
.glyph { font: bold 8px "DejaVu Sans", sans-serif; text-anchor: middle; letter-spacing: 0; }
.office { font: bold 12px "Open Sans", sans-serif; fill: #fff; text-anchor: middle; letter-spacing: 0; }
.office.w { font-size: 10px; }
```
